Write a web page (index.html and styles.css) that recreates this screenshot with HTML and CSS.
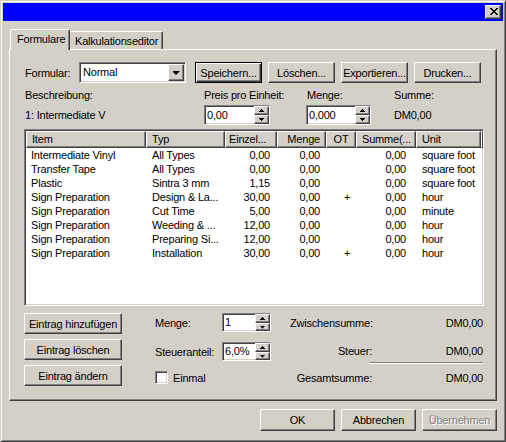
FILE: index.html
```html
<!DOCTYPE html>
<html lang="de">
<head>
    <meta charset="UTF-8">
    <title>Formulare</title>
    <link rel="stylesheet" href="styles.css">
</head>
<body>
<div class="window">
    <div class="titlebar">
        <span class="close">
            <svg width="8" height="7" viewBox="0 0 8 7" shape-rendering="crispEdges">
                <path d="M0 0h2v1h-2zM6 0h2v1h-2zM1 1h2v1h-2zM5 1h2v1h-2zM2 2h4v1h-4zM3 3h2v1h-2zM2 4h4v1h-4zM1 5h2v1h-2zM5 5h2v1h-2zM0 6h2v1h-2zM6 6h2v1h-2z" fill="#000"/>
            </svg>
        </span>
    </div>

    <div class="content">
        <div class="tabs">
            <div class="tab active">Formulare</div>
            <div class="tab">Kalkulationseditor</div>
        </div>

        <div class="panel">
            <!-- Formularauswahl -->
            <div class="toolbar">
                <span class="lbl">Formular:</span>
                <div class="combo">
                    <span class="val">Normal</span>
                    <span class="drop"><i class="arrow-down-big"></i></span>
                </div>
                <div class="btn default first">Speichern...</div>
                <div class="btn">Löschen...</div>
                <div class="btn">Exportieren...</div>
                <div class="btn">Drucken...</div>
            </div>

            <div class="heads">
                <span class="pl1">Beschreibung:</span>
                <span>Preis pro Einheit:</span>
                <span class="pl1">Menge:</span>
                <span>Summe:</span>
            </div>

            <div class="values">
                <span class="pl1">1: Intermediate V</span>
                <div class="spin w66">
                    <span class="val">0,00</span>
                    <span class="arrows"><span class="arr"><i class="up"></i></span><span class="arr"><i class="dn"></i></span></span>
                </div>
                <div class="spin w65">
                    <span class="val">0,000</span>
                    <span class="arrows"><span class="arr"><i class="up"></i></span><span class="arr"><i class="dn"></i></span></span>
                </div>
                <span>DM0,00</span>
            </div>

            <!-- Positionsliste -->
            <div class="list">
                <div class="lhead">
                    <span class="l">Item</span>
                    <span class="l">Typ</span>
                    <span class="l tight">Einzel...</span>
                    <span class="r">Menge</span>
                    <span class="c">OT</span>
                    <span class="l">Summe(...</span>
                    <span class="l">Unit</span>
                    <span></span>
                </div>
                <div class="lrow"><span class="c1">Intermediate Vinyl</span><span class="c2">All Types</span><span class="c3">0,00</span><span class="c4">0,00</span><span class="c5"></span><span class="c6">0,00</span><span class="c7">square foot</span></div>
                <div class="lrow"><span class="c1">Transfer Tape</span><span class="c2">All Types</span><span class="c3">0,00</span><span class="c4">0,00</span><span class="c5"></span><span class="c6">0,00</span><span class="c7">square foot</span></div>
                <div class="lrow"><span class="c1">Plastic</span><span class="c2">Sintra 3 mm</span><span class="c3">1,15</span><span class="c4">0,00</span><span class="c5"></span><span class="c6">0,00</span><span class="c7">square foot</span></div>
                <div class="lrow"><span class="c1">Sign Preparation</span><span class="c2">Design &amp; La...</span><span class="c3">30,00</span><span class="c4">0,00</span><span class="c5">+</span><span class="c6">0,00</span><span class="c7">hour</span></div>
                <div class="lrow"><span class="c1">Sign Preparation</span><span class="c2">Cut Time</span><span class="c3">5,00</span><span class="c4">0,00</span><span class="c5"></span><span class="c6">0,00</span><span class="c7">minute</span></div>
                <div class="lrow"><span class="c1">Sign Preparation</span><span class="c2">Weeding &amp; ...</span><span class="c3">12,00</span><span class="c4">0,00</span><span class="c5"></span><span class="c6">0,00</span><span class="c7">hour</span></div>
                <div class="lrow"><span class="c1">Sign Preparation</span><span class="c2">Preparing Si...</span><span class="c3">12,00</span><span class="c4">0,00</span><span class="c5"></span><span class="c6">0,00</span><span class="c7">hour</span></div>
                <div class="lrow"><span class="c1">Sign Preparation</span><span class="c2">Installation</span><span class="c3">30,00</span><span class="c4">0,00</span><span class="c5">+</span><span class="c6">0,00</span><span class="c7">hour</span></div>
            </div>

            <div class="bottom">
                <div class="actions">
                    <div class="btn wide">Eintrag hinzufügen</div>
                    <div class="btn wide">Eintrag löschen</div>
                    <div class="btn wide">Eintrag ändern</div>
                </div>

                <div class="fields">
                    <span>Menge:</span>
                    <div class="spin w49">
                        <span class="val">1</span>
                        <span class="arrows"><span class="arr"><i class="up"></i></span><span class="arr"><i class="dn"></i></span></span>
                    </div>
                    <span>Steueranteil:</span>
                    <div class="spin w49">
                        <span class="val">6,0%</span>
                        <span class="arrows"><span class="arr"><i class="up"></i></span><span class="arr"><i class="dn"></i></span></span>
                    </div>
                    <div class="check"><span class="box"></span>Einmal</div>
                </div>

                <div class="totals">
                    <div class="trow"><span>Zwischensumme:</span><span>DM0,00</span></div>
                    <div class="trow second"><span>Steuer:</span><span>DM0,00</span></div>
                    <div class="sep"></div>
                    <div class="trow third"><span>Gesamtsumme:</span><span>DM0,00</span></div>
                </div>
            </div>
        </div>

        <div class="footer">
            <div class="btn big">OK</div>
            <div class="btn big">Abbrechen</div>
            <div class="btn big disabled">Übernehmen</div>
        </div>
    </div>
</div>
</body>
</html>
```

FILE: styles.css
```css
* {
    margin: 0;
    padding: 0;
    box-sizing: border-box;
}

body {
    font-family: "Liberation Sans", Arial, sans-serif;
    font-size: 11px;
    letter-spacing: -0.2px;
    color: #000;
    background: #d4d0c8;
}

i {
    display: block;
}

.window {
    width: 506px;
    height: 442px;
    padding: 2px;
    background: #d4d0c8;
    border: 1px solid;
    border-color: #d4d0c8 #404040 #404040 #d4d0c8;
    box-shadow: inset 1px 1px #fff, inset -1px -1px #808080;
}

/* Titelleiste */
.titlebar {
    height: 18px;
    background: #0000ff;
    display: flex;
    justify-content: flex-end;
    padding: 2px 2px 0 0;
}

.close {
    display: block;
    width: 16px;
    height: 14px;
    background: #d4d0c8;
    border: 1px solid;
    border-color: #fff #404040 #404040 #fff;
    box-shadow: inset -1px -1px #808080;
}

.close svg {
    display: block;
    margin: 2px 0 0 4px;
}

.content {
    padding: 8px 0 0 6px;
}

/* Reiter */
.tabs {
    display: flex;
    align-items: flex-end;
    height: 20px;
    padding-left: 1px;
}

.tab {
    width: 93px;
    height: 18px;
    padding: 2px 0 0 5px;
    line-height: 14px;
    border-top: 1px solid #fff;
    border-right: 1px solid #404040;
    border-top-right-radius: 2px;
    box-shadow: inset -1px 0 #808080;
    white-space: nowrap;
}

.tab.active {
    width: 60px;
    height: 21px;
    margin-bottom: -1px;
    padding-left: 6px;
    border-left: 1px solid #fff;
    border-top-left-radius: 2px;
    background: #d4d0c8;
    position: relative;
    z-index: 1;
}

.panel {
    width: 488px;
    height: 352px;
    padding: 12px 0 0 14px;
    border: 1px solid;
    border-color: #fff #404040 #404040 #fff;
    box-shadow: inset -1px -1px #808080;
}

/* Knoepfe */
.btn {
    width: 67px;
    height: 21px;
    display: flex;
    align-items: center;
    justify-content: center;
    background: #d4d0c8;
    border: 1px solid;
    border-color: #fff #404040 #404040 #fff;
    box-shadow: inset -1px -1px #808080;
    white-space: nowrap;
}

.btn.default {
    border-color: #000;
    box-shadow: inset 1px 1px #fff, inset -1px -1px #404040, inset -2px -2px #808080;
}

.btn.wide {
    width: 98px;
}

.btn.big {
    width: 75px;
    height: 22px;
}

.btn.disabled {
    color: #808080;
    text-shadow: 1px 1px #fff;
}

.pl1 {
    padding-left: 1px;
}

/* erste Zeile */
.toolbar {
    display: flex;
    align-items: center;
    height: 21px;
}

.toolbar .lbl {
    width: 55px;
    padding-left: 1px;
}

.toolbar .btn {
    margin-left: 6px;
}

.toolbar .btn.first {
    margin-left: 9px;
}

.combo {
    width: 107px;
    height: 21px;
    display: flex;
    background: #fff;
    border: 1px solid;
    border-color: #808080 #fff #fff #808080;
    box-shadow: inset 1px 1px #404040, inset -1px -1px #d4d0c8;
    padding: 1px;
}

.combo .val {
    flex: 1;
    padding-left: 2px;
    line-height: 17px;
}

.combo .drop {
    width: 16px;
    height: 17px;
    display: flex;
    justify-content: center;
    padding-top: 6px;
    background: #d4d0c8;
    border: 1px solid;
    border-color: #fff #404040 #404040 #fff;
    box-shadow: inset -1px -1px #808080;
}

.arrow-down-big {
    width: 7px;
    height: 4px;
    background: #000;
    clip-path: polygon(0 0, 7px 0, 7px 1px, 6px 1px, 6px 2px, 5px 2px, 5px 3px, 4px 3px, 4px 4px, 3px 4px, 3px 3px, 2px 3px, 2px 2px, 1px 2px, 1px 1px, 0 1px);
}

.heads,
.values {
    display: grid;
    grid-template-columns: 180px 102px 88px 1fr;
    align-items: center;
}

.heads {
    margin-top: 5px;
    height: 14px;
    line-height: 14px;
}

.values {
    margin-top: 3px;
    height: 20px;
}

/* Drehfelder */
.spin {
    height: 20px;
    display: flex;
    background: #fff;
    border: 1px solid;
    border-color: #808080 #fff #fff #808080;
    box-shadow: inset 1px 1px #404040, inset -1px -1px #d4d0c8;
}

.spin.w66 { width: 66px; }
.spin.w65 { width: 65px; }
.spin.w49 { width: 49px; height: 19px; }

.spin .val {
    flex: 1;
    padding-left: 2px;
    line-height: 18px;
}

.spin.w49 .val {
    line-height: 17px;
}

.spin .arrows {
    width: 15px;
    display: flex;
    flex-direction: column;
}

.arr {
    flex: 1;
    display: flex;
    justify-content: center;
    padding-top: 2px;
    background: #d4d0c8;
    border: 1px solid;
    border-color: #fff #404040 #404040 #fff;
    box-shadow: inset -1px -1px #808080;
}

.arr .up,
.arr .dn {
    width: 5px;
    height: 3px;
    background: #000;
}

.arr .up {
    clip-path: polygon(2px 0, 3px 0, 3px 1px, 4px 1px, 4px 2px, 5px 2px, 5px 3px, 0 3px, 0 2px, 1px 2px, 1px 1px, 2px 1px);
}

.arr .dn {
    clip-path: polygon(0 0, 5px 0, 5px 1px, 4px 1px, 4px 2px, 3px 2px, 3px 3px, 2px 3px, 2px 2px, 1px 2px, 1px 1px, 0 1px);
}

/* Liste */
.list {
    width: 460px;
    height: 177px;
    margin-top: 4px;
    background: #fff;
    border: 1px solid;
    border-color: #808080 #fff #fff #808080;
    box-shadow: inset 1px 1px #404040, inset -1px -1px #d4d0c8;
    padding: 1px;
    overflow: hidden;
}

.lhead,
.lrow {
    display: grid;
    grid-template-columns: 120px 79px 52px 49px 30px 60px 65px 1fr;
    white-space: nowrap;
}

.lhead {
    height: 17px;
}

.lhead span {
    line-height: 15px;
    background: #d4d0c8;
    border: 1px solid;
    border-color: #fff #404040 #404040 #fff;
    box-shadow: inset -1px -1px #808080;
    overflow: hidden;
}

.lhead .l { padding-left: 5px; }
.lhead .l.tight { padding-left: 3px; }
.lhead .r { text-align: right; padding-right: 5px; }
.lhead .c { text-align: center; }

.lrow {
    height: 14px;
    line-height: 14px;
}

.lrow span { overflow: hidden; }
.lrow .c1 { padding-left: 5px; }
.lrow .c2 { padding-left: 6px; }
.lrow .c3 { text-align: right; padding-right: 7px; }
.lrow .c4 { text-align: right; padding-right: 6px; }
.lrow .c5 { text-align: center; padding-left: 12px; }
.lrow .c6 { text-align: right; padding-right: 10px; }
.lrow .c7 { padding-left: 6px; }

/* unterer Bereich */
.bottom {
    display: flex;
    margin-top: 7px;
}

.actions {
    display: flex;
    flex-direction: column;
    gap: 5px;
}

.fields {
    margin-left: 33px;
    display: grid;
    grid-template-columns: 67px 49px;
    grid-template-rows: 19px 19px 13px;
    row-gap: 10px;
    align-items: center;
}

.check {
    grid-column: 1 / 3;
    display: flex;
    align-items: center;
    height: 13px;
}

.check .box {
    width: 13px;
    height: 13px;
    margin-right: 5px;
    background: #fff;
    border: 1px solid;
    border-color: #808080 #fff #fff #808080;
    box-shadow: inset 1px 1px #404040, inset -1px -1px #d4d0c8;
}

.totals {
    margin-left: 19px;
    width: 193px;
}

.trow {
    display: grid;
    grid-template-columns: 82px 1fr;
    height: 20px;
    line-height: 20px;
    text-align: right;
    white-space: nowrap;
}

.trow.second {
    margin-top: 8px;
}

.trow.third {
    margin-top: 4px;
}

.sep {
    margin: 1px 0 0 79px;
    height: 2px;
    border-top: 1px solid #808080;
    border-bottom: 1px solid #fff;
}

.footer {
    width: 488px;
    margin-top: 8px;
    display: flex;
    justify-content: flex-end;
    gap: 6px;
}
```
